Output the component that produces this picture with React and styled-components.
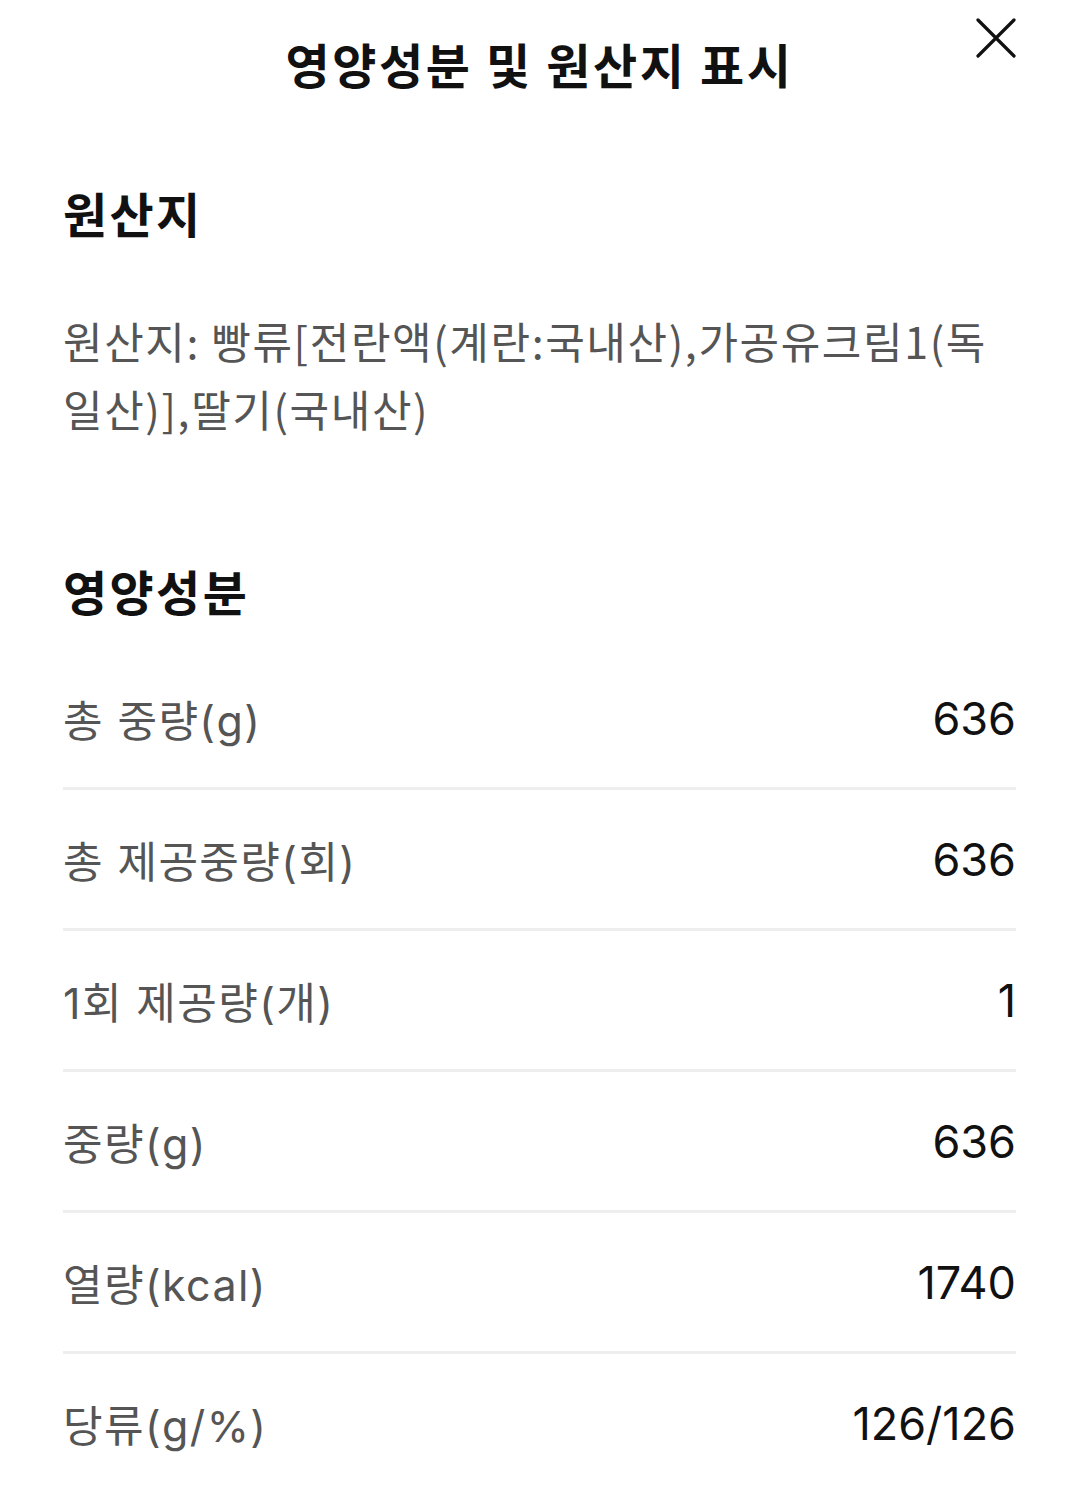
import React from "react";
import styled, { createGlobalStyle } from "styled-components";

const GlobalStyle = createGlobalStyle`
  html, body {
    margin: 0;
    padding: 0;
    background: #ffffff;
  }
  body {
    font-family: "Inter", "Noto Sans CJK KR", sans-serif;
    -webkit-font-smoothing: antialiased;
  }
`;

const Page = styled.div`
  width: 1080px;
  min-height: 1501px;
  box-sizing: border-box;
  padding: 0 64px 0 63px;
  background: #fff;
`;

const Header = styled.header`
  position: relative;
  height: 126px;
  display: flex;
  align-items: center;
  justify-content: center;
`;

const Title = styled.h1`
  margin: 0;
  font-family: "Noto Sans CJK KR", sans-serif;
  font-size: 48px;
  font-weight: 700;
  color: #111;
  letter-spacing: 2.6px;
`;

const CloseButton = styled.button`
  position: absolute;
  right: 0;
  top: 18px;
  width: 40px;
  height: 40px;
  padding: 0;
  border: 0;
  background: transparent;
  display: flex;
  align-items: center;
  justify-content: center;
`;

const Section = styled.section`
  display: flex;
  flex-direction: column;
  padding-top: ${(p) => p.$top}px;
`;

const SectionTitle = styled.h2`
  margin: 0;
  font-family: "Noto Sans CJK KR", sans-serif;
  font-size: 48px;
  line-height: 60px;
  font-weight: 700;
  color: #111;
  letter-spacing: 2.4px;
`;

const Body = styled.p`
  margin: 64px 0 0;
  font-family: "Noto Sans CJK KR", sans-serif;
  font-size: 43px;
  line-height: 68px;
  color: #555;
  letter-spacing: 1.6px;
  word-break: break-all;
`;

const Table = styled.div`
  margin-top: 29px;
  display: flex;
  flex-direction: column;
`;

const Row = styled.div`
  height: 138px;
  display: flex;
  align-items: center;
  justify-content: space-between;
  border-bottom: 3px solid #eeeeee;
  &:last-child {
    border-bottom: 0;
  }
`;

const Label = styled.span`
  font-size: 43px;
  color: #555;
  letter-spacing: 1.4px;
`;

const Value = styled.span`
  font-size: 45px;
  color: #111;
  letter-spacing: 0;
`;

const rows = [
  ["총 중량(g)", "636"],
  ["총 제공중량(회)", "636"],
  ["1회 제공량(개)", "1"],
  ["중량(g)", "636"],
  ["열량(kcal)", "1740"],
  ["당류(g/%)", "126/126"],
];

export default function App() {
  return (
    <>
      <GlobalStyle />
      <Page>
        <Header>
          <Title>영양성분 및 원산지 표시</Title>
          <CloseButton aria-label="닫기">
            <svg width="40" height="40" viewBox="0 0 40 40">
              <path
                d="M2 2 L38 38 M38 2 L2 38"
                stroke="#111"
                strokeWidth="3.2"
                strokeLinecap="round"
                fill="none"
              />
            </svg>
          </CloseButton>
        </Header>
        <Section $top={56}>
          <SectionTitle>원산지</SectionTitle>
          <Body>
            원산지: 빵류[전란액(계란:국내산),가공유크림1(독일산)],딸기(국내산)
          </Body>
        </Section>
        <Section $top={118}>
          <SectionTitle>영양성분</SectionTitle>
          <Table>
            {rows.map(([l, v]) => (
              <Row key={l}>
                <Label>{l}</Label>
                <Value>{v}</Value>
              </Row>
            ))}
          </Table>
        </Section>
      </Page>
    </>
  );
}
